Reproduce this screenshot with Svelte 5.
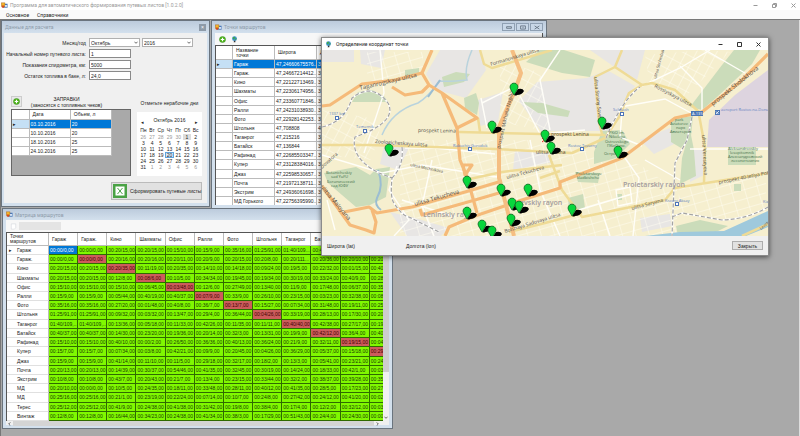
<script>
  const points = [
    ['Гараж', '47,24660675576...', '39'], ['Гараж.', '47,24667214412...', '39'],
    ['Кино', '47,22122713469...', '39'], ['Шахматы', '47,22306174956...', '39'],
    ['Офис', '47,23360771846...', '39'], ['Ралли', '47,24231038930...', '39'],
    ['Фото', '47,22928142253...', '39'], ['Штольня', '47,708808', '40'],
    ['Таганрог', '47,215216', '38'], ['Батайск', '47,136844', '39'],
    ['Рафинад', '47,22685503347...', '39'], ['Купер', '47,23128384016...', '39'],
    ['Джаз', '47,22598530657...', '39'], ['Почта', '47,21972138711...', '39'],
    ['Экстрим', '47,24936061698...', '39'], ['МД Горького', '47,22756395990...', '39']
  ];
  const fuel = [['03.10.2016', '20'], ['10.10.2016', '20'], ['18.10.2016', '25'], ['24.10.2016', '25']];
  const weekdays = ['Пн', 'Вт', 'Ср', 'Чт', 'Пт', 'Сб', 'Вс'];
  const first = -4;
  const weeks = Array.from({ length: 6 }, (_, w) =>
    Array.from({ length: 7 }, (_, d) => {
      const n = first + w * 7 + d;
      return { label: n < 1 ? n + 30 : n > 31 ? n - 31 : n, other: n < 1 || n > 31, off: n === 1, today: n === 20 };
    })
  );
  const columns = ['Гараж', 'Гараж.', 'Кино', 'Шахматы', 'Офис', 'Ралли', 'Фото', 'Штольня', 'Таганрог', 'Батайск', 'Рафинад', 'Купер'];
  const matrix = [
    ['Гараж', '00:00/0,00|00:00/0,00|00:20/15,00|00:20/15,00|00:15/10,00|00:15/9,00|00:35/16,00|01:25/91,00|01:40/109...|00:40/37,00|00:15/10,00|00:15/7,00'],
    ['Гараж.', '00:00/0,00|00:00/0,00|00:20/16,00|00:20/16,00|00:20/11,00|00:20/9,00|00:20/15,00|00:20/8,00|00:20/111...|00:20/36,00|00:20/10,00|00:20/7,00'],
    ['Кино', '00:20/15,00|00:20/15,00|00:20/35,00|00:11/19,00|00:20/35,00|00:14/10,00|00:14/18,00|00:09/24,00|00:19/5,00|00:22/32,00|00:01/15,00|00:40/9,00'],
    ['Шахматы', '00:20/15,00|00:20/15,00|00:12/8,00|00:08/6,00|00:10/5,00|00:34/34,00|00:19/45,00|00:19/34,00|00:30/19,00|00:33/24,00|00:40/9,00|00:28/4,00'],
    ['Офис', '00:15/10,00|00:15/10,00|00:15/10,00|00:06/45,00|00:03/48,00|00:12/6,00|00:27/49,00|00:13/40,00|00:11/9,00|00:17/48,00|00:06/37,00|00:35/2,00'],
    ['Ралли', '00:15/9,00|00:15/9,00|00:05/44,00|00:40/19,00|00:40/37,00|00:07/9,00|00:33/9,00|00:26/10,00|00:23/15,00|00:03/23,00|00:32/38,00|00:08/5,00'],
    ['Фото', '00:35/16,00|00:35/16,00|00:27/20,00|00:01/48,00|00:40/8,00|00:36/7,00|00:13/7,00|00:15/27,00|00:07/34,00|00:31/48,00|00:19/11,00|00:25/6,00'],
    ['Штольня', '01:25/91,00|01:25/91,00|00:09/32,00|00:03/32,00|00:13/47,00|00:29/4,00|00:36/44,00|00:04/26,00|00:33/19,00|00:28/13,00|00:17/30,00|00:20/8,00'],
    ['Таганрог', '01:40/109,...|01:40/109,...|00:13/36,00|00:05/18,00|00:11/33,00|00:42/26,00|00:11/35,00|00:11/11,00|00:40/40,00|00:42/38,00|00:27/17,00|00:19/4,00'],
    ['Батайск', '00:40/37,00|00:40/37,00|00:14/30,00|00:23/20,00|00:19/36,00|00:20/14,00|00:32/3,00|00:13/31,00|00:19/9,00|00:42/12,00|00:36/4,00|00:40/7,00'],
    ['Рафинад', '00:15/10,00|00:15/10,00|00:40/10,00|00:00/2,00|00:26/50,00|00:36/36,00|00:40/13,00|00:36/24,00|00:21/9,00|00:32/11,00|00:19/15,00|00:04/3,00'],
    ['Купер', '00:15/7,00|00:15/7,00|00:07/34,00|00:03/8,00|00:42/21,00|00:09/9,00|00:20/45,00|00:04/26,00|00:36/29,00|00:05/37,00|00:15/18,00|00:29/6,00'],
    ['Джаз', '00:15/9,00|00:15/9,00|00:41/14,00|00:11/10,00|00:11/5,00|00:29/18,00|00:32/17,00|00:18/2,00|00:13/3,00|00:05/41,00|00:23/21,00|00:24/3,00'],
    ['Почта', '00:20/13,00|00:20/13,00|00:14/39,00|00:30/37,00|00:54/46,00|00:41/35,00|00:32/45,00|00:30/19,00|00:14/24,00|00:18/33,00|00:42/1,00|00:03/2,00'],
    ['Экстрим', '00:10/8,00|00:10/8,00|00:43/7,00|00:20/43,00|00:21/7,00|00:13/4,00|00:23/15,00|00:33/44,00|00:32/2,00|00:38/37,00|00:39/28,00|00:35/9,00'],
    ['МД', '00:20/10,00|00:00/0,00|00:10/5,00|00:24/35,00|00:18/11,00|00:33/48,00|00:28/11,00|00:40/12,00|00:41/35,00|00:28/5,00|00:17/23,00|00:27/1,00'],
    ['МД', '00:25/16,00|00:25/16,00|00:21/1,00|00:23/19,00|00:22/24,00|00:07/14,00|00:10/7,00|00:24/8,00|00:27/42,00|00:24/12,00|00:41/20,00|00:02/5,00'],
    ['Терес', '00:25/12,00|00:25/12,00|00:41/9,00|00:24/38,00|00:41/38,00|00:31/42,00|00:19/8,00|00:38/4,00|00:17/4,00|00:12/2,00|00:32/12,00|00:03/7,00'],
    ['Винтаж', '00:12/8,00|00:12/8,00|00:16/44,00|00:34/23,00|00:24/38,00|00:41/34,00|00:38/3,00|00:17/29,00|00:51/43,00|00:24/4,00|00:24/30,00|00:00/8,00']
  ].map(([name, cells]) => ({ name, cells: cells.split('|') }));

  const pins = [[514, 95], [492, 133], [389, 156], [602, 129], [545, 142], [551, 154], [618, 158], [467, 188], [501, 196], [528, 196], [512, 210], [519, 213], [467, 219], [511, 226], [572, 216], [482, 232], [492, 238]];

  // x, y, rotation, text, kind
  const places = [
    [360, 90, -13, 'Taganrogskaya ulitsa', 'main'],
    [491, 66, -17, 'Formanovskaya ulitsa', 'road'],
    [500, 149, -77, 'prospekt Mikhaila Nagibina', 'road'],
    [418, 132, 1, 'prospekt Lenina', 'road'],
    [551, 136, 0, 'prospekt Lenina', 'road'],
    [375, 143, 4, 'Zoologicheskaya ulitsa', 'road'],
    [410, 166, 12, 'ulitsa Mechnikova', 'small'],
    [322, 169, -42, 'Dovatora', 'road'],
    [320, 187, 50, 'ulitsa Maloyana', 'main'],
    [415, 206, -16, 'ulitsa Tekucheva', 'main'],
    [507, 179, -15, 'ulitsa Tekucheva', 'road'],
    [594, 77, 84, 'ulitsa Strany Sovetov', 'road'],
    [656, 79, -74, 'ulitsa Shcherbakova', 'small'],
    [654, 87, 28, 'Rossiyskaya ulitsa', 'road'],
    [713, 106, -39, 'prospekt Sholokhova', 'main'],
    [536, 154, 0, 'ulitsa Lenina', 'road'],
    [505, 233, -17, 'Bolshaya Sadovaya ulitsa', 'road'],
    [632, 210, -15, 'ulitsa Saryana', 'road'],
    [719, 184, -11, 'prospekt 40-letiya Pobedy', 'road'],
    [702, 135, 87, 'ulitsa Vereseyeva', 'road'],
    [761, 230, -40, 'Levoberezhnaya', 'small'],
    [423, 217, 0, 'Leninskiy rayon', 'area'],
    [520, 205, 0, 'evskiy rayon', 'area'],
    [623, 187, 0, 'Proletarskiy rayon', 'area'],
    [329, 115, 0, '1337 km', 'rail'],
    [356, 128, 0, 'Temernik', 'rail'],
    [453, 147, 0, 'Rabochiy Gorodok', 'rail'],
    [613, 111, 0, 'Selmash', 'rail'],
    [568, 147, 0, 'Rostov-Tovarny', 'rail'],
    [665, 202, 0, 'Krasny Aksay', 'rail'],
    [721, 111, 0, 'aeroport Rostov-na-Donu', 'rail'],
    [763, 203, 0, 'Kiziterinka', 'rail'],
    [326, 174, 0, 'Botanicheskiy', 'park'],
    [331, 178, 0, 'sad YuFU', 'park'],
    [327, 183, 0, 'Ботанический', 'park'],
    [331, 187, 0, 'сад ЮФУ', 'park'],
    [675, 121, 0, 'park', 'park'],
    [670, 125, 0, 'Aviatorov', 'park'],
    [676, 129, 0, 'парк', 'park'],
    [670, 133, 0, 'Авиаторов', 'park'],
    [609, 134, 0, 'PKiO im.', 'park'],
    [609, 138, 0, 'Nikolaya', 'park'],
    [605, 143, 0, 'Ostrovskogo', 'park'],
    [607, 147, 0, 'ПКиО им.', 'park'],
    [604, 155, 0, 'Островского', 'park'],
    [576, 175, 0, 'Proletarskoye', 'park'],
    [577, 179, 0, 'kladbishche', 'park'],
    [728, 150, 0, 'Aleksandrovskiy', 'park'],
    [730, 154, 0, 'lesopitomnik', 'park'],
    [728, 158, 0, 'Александровский', 'park'],
    [731, 162, 0, 'лесопитомник', 'park']
  ];
  const stops = [[337, 118], [365, 131], [470, 149], [622, 114], [582, 149], [677, 204]];

  const orange = [
    'M322 106L330 105L362 84L395 80L422 73', 'M432 50L422 73L429 85L442 93L477 118L457 128L442 93',
    'M392 87L405 95L422 92L429 85', 'M457 128L460 160L467 177L477 213', 'M465 175l-2 -10h9z',
    'M344 212L369 207L377 213L412 207L465 192L502 181', 'M372 210L376 222L374 233L366 230L350 225L322 186',
    'M445 236L449 227L475 216L522 200L560 188L560 182L599 167L622 158L675 118L702 112L740 82L768 54', 'M420 209l2 6l53 -15l24 -7'
  ];
  const avenue = ['M512 50L521 73L514 93L499 127L499 178L514 236'];
  const yellow = [
    'M459 132L542 134L605 135', 'M322 145L369 145L432 147L495 149L572 153L605 138L619 117L629 93L642 85L652 83L675 90L699 112',
    'M642 85L615 67L622 50', 'M615 67L595 77L599 122L602 134', 'M592 215L665 200L675 188L768 173', 'M699 115L705 147L704 183',
    'M549 155L562 190L582 217L592 215', 'M480 50L484 64L492 68L552 50', 'M509 232L545 223L582 213', 'M768 224L742 236',
    'M465 180L502 172L562 165', 'M480 132L478 118', 'M540 178l20 -7'
  ];
  const white = [
    'M380 50l4 43l-20 60', 'M482 103l36 -18M487 128l-6 -30', 'M322 155l60 18l40 -8l75 12', 'M397 166l-8 24l20 30l-15 16',
    'M405 148h30l60 6', 'M432 160l-10 46l12 30', 'M520 96l20 38l45 -4', 'M642 86l38 -18l30 -18', 'M680 66l22 22v22', 'M705 50l45 26',
    'M620 107l45 -8l28 15', 'M622 112l-2 25l22 9', 'M625 158l14 20l-6 58', 'M572 212l60 -18', 'M645 160l35 20', 'M598 200l12 36',
    'M530 140l10 50l20 46', 'M327 200l8 30', 'M402 200l50 16', 'M690 149h78', 'M616 190l14 -3l2 16l-14 3z', 'M560 50l-20 30l10 50'
  ];
  const rails = 'M322 127Q345 122 352 98Q372 82 388 103Q398 122 355 137Q350 158 379 173L392 178Q390 198 394 203Q402 216 409 217L439 232M402 147Q404 166 392 178M692 117L687 140L675 163L672 236M672 217L682 213L722 220Q748 219 768 207M606 138Q622 100 640 87';
</script>

{#snippet formIcon()}
  <svg class="icon" viewBox="0 0 16 16" aria-hidden="true"><rect x="5" y="4" width="10" height="9" fill="#4a78b8" /><rect x="1" y="2" width="8" height="8" fill="#f5b72a" stroke="#a55d16" /><rect x="2" y="8" width="5" height="5" fill="#d44b1e" /><rect x="9" y="7" width="5" height="4" fill="#dbe9fa" /></svg>
{/snippet}
{#snippet plusIcon()}
  <svg class="icon" viewBox="0 0 16 16" aria-hidden="true"><circle cx="8" cy="8" r="7" fill="#51b51d" stroke="#2f8a12" /><path d="M8 4v8M4 8h8" stroke="#fff" stroke-width="2.6" /></svg>
{/snippet}
{#snippet globeIcon()}
  <svg class="icon" viewBox="0 0 16 16" aria-hidden="true"><circle cx="8" cy="6" r="5.5" fill="#3d90c9" /><path d="M4 3q4-3 5 0t-4 5zM9 6l4-1-2 5z" fill="#3da84a" /><path d="M7 11h3v3H6z" fill="#333" /></svg>
{/snippet}

<div class="app">
  <header class="titlebar">
    {@render formIcon()}
    <h1>Программа для автоматического формирования путевых листов [1.0.2.0]</h1>
    <div class="winbtns faded">
      <button aria-label="Свернуть"><svg viewBox="0 0 10 10"><path d="M1 5h8" /></svg></button>
      <button aria-label="Восстановить"><svg viewBox="0 0 10 10"><path d="M1 3h6v6H1zM3 3V1h6v6H7" /></svg></button>
      <button aria-label="Закрыть программу"><svg viewBox="0 0 10 10"><path d="M1 1l8 8M9 1L1 9" /></svg></button>
    </div>
  </header>
  <nav class="menu"><button>Основное</button><button>Справочники</button></nav>

  <main class="desk">
    <section class="win data">
      <div class="caption"><h2>Данные для расчета</h2><button class="close" aria-label="Закрыть">×</button></div>
      <div class="client">
        <div class="form">
          <label for="month">Месяц/год</label>
          <div class="pair">
            <span class="combo"><select id="month"><option>Октябрь</option></select><svg viewBox="0 0 10 6"><path d="M1 1l4 4 4-4" /></svg></span>
            <span class="combo"><select aria-label="Год"><option>2016</option></select><svg viewBox="0 0 10 6"><path d="M1 1l4 4 4-4" /></svg></span>
          </div>
          <label for="num">Начальный номер путевого листа:</label><input id="num" value="1" />
          <label for="odo">Показания спидометра, км:</label><input id="odo" value="5000" />
          <label for="rest">Остаток топлива в баке, л:</label><input id="rest" value="24,0" />
        </div>
        <div class="lower">
          <div class="fuel">
            <div class="fuelhead">
              <button class="add" aria-label="Добавить заправку">{@render plusIcon()}</button>
              <p>ЗАПРАВКИ<br />(заносятся с топливных чеков)</p>
            </div>
            <div class="fuelbox">
              <table class="grid">
                <thead><tr><th></th><th>Дата</th><th>Объем, л</th></tr></thead>
                <tbody>
                  {#each fuel as row, i}
                    <tr class:sel={i === 0}><th>{i === 0 ? '▸' : ''}</th><td>{row[0]}</td><td>{row[1]}</td></tr>
                  {/each}
                </tbody>
              </table>
            </div>
          </div>
          <div class="days">
            <p>Отметьте нерабочие дни</p>
            <div class="calendar">
              <div class="month"><button aria-label="Предыдущий месяц">◂</button><span>Октябрь 2016</span><button aria-label="Следующий месяц">▸</button></div>
              <table>
                <thead><tr>{#each weekdays as d}<th>{d}</th>{/each}</tr></thead>
                <tbody>
                  {#each weeks as week}
                    <tr>{#each week as d}<td class:other={d.other} class:off={d.off} class:today={d.today}>{d.label}</td>{/each}</tr>
                  {/each}
                </tbody>
              </table>
            </div>
          </div>
        </div>
        <button class="make">
          <svg viewBox="0 0 28 28" aria-hidden="true"><rect width="28" height="28" fill="#4aa245" /><rect x="5" y="5" width="18" height="18" fill="#fff" /><path d="M9 8l10 12M19 8L9 20" stroke="#4aa245" stroke-width="2" /></svg>
          <span>Сформировать путевые листы</span>
        </button>
      </div>
    </section>

    <section class="win points">
      <div class="caption">
        {@render formIcon()}<h2>Точки маршрутов</h2>
        <div class="mdi">
          <button aria-label="Свернуть окно"><svg viewBox="0 0 10 6"><path d="M2 2h6v2H2z" /></svg></button>
          <button aria-label="Развернуть окно"><svg viewBox="0 0 10 6"><path d="M2 1h6v4H2zM5 2v2" /></svg></button>
          <button aria-label="Закрыть окно"><svg viewBox="0 0 10 6"><path d="M2 1l6 4M8 1L2 5" /></svg></button>
        </div>
      </div>
      <div class="client">
        <div class="tools"><button aria-label="Добавить точку">{@render plusIcon()}</button><button aria-label="Показать на карте">{@render globeIcon()}</button></div>
        <table class="grid">
          <thead><tr><th></th><th>Название<br />точки</th><th>Широта</th><th>Долгота</th></tr></thead>
          <tbody>
            {#each points as p, i}
              <tr class:sel={i === 0}><th>{i === 0 ? '▸' : ''}</th>{#each p as v}<td>{v}</td>{/each}</tr>
            {/each}
          </tbody>
        </table>
      </div>
    </section>

    <section class="win matrix">
      <div class="caption">{@render formIcon()}<h2>Матрица маршрутов</h2></div>
      <div class="client">
        <div class="tools"><button aria-label="Обновить"><svg class="icon" viewBox="0 0 16 16"><path d="M3 2h10v9l-3 3H3z" fill="#fff" stroke="#c5cbd3" /></svg></button><input aria-label="Состояние" disabled /></div>
        <div class="scroll">
          <div class="view">
            <table class="grid">
              <thead><tr><th>Точки<br />маршрутов</th>{#each columns as c}<th>{c}</th>{/each}</tr></thead>
              <tbody>
                {#each matrix as row, i}
                  <tr>
                    <th><i>{i === 0 ? '▸' : ''}</i><span>{row.name}</span></th>
                    {#each row.cells as cell, j}<td class:red={i === j && i > 0} class:picked={i === 0 && j === 0}>{cell}</td>{/each}
                  </tr>
                {/each}
              </tbody>
            </table>
          </div>
          <div class="vbar"><div class="thumb"></div><svg viewBox="0 0 10 6"><path d="M1 1l4 4 4-4" /></svg></div>
        </div>
        <div class="hbar"><svg viewBox="0 0 6 10"><path d="M5 1L1 5l4 4" /></svg><div class="thumb"></div><svg viewBox="0 0 6 10"><path d="M1 1l4 4-4 4" /></svg></div>
      </div>
    </section>

    <section class="dialog">
      <div class="dtitle">
        {@render globeIcon()}<h2>Определение координат точки</h2>
        <div class="winbtns">
          <button aria-label="Свернуть карту"><svg viewBox="0 0 10 10"><path d="M1 5h8" /></svg></button>
          <button aria-label="Развернуть карту"><svg viewBox="0 0 10 10"><path d="M1 1h8v8H1z" /></svg></button>
          <button aria-label="Закрыть карту"><svg viewBox="0 0 10 10"><path d="M1 1l8 8M9 1L1 9" /></svg></button>
        </div>
      </div>
      <svg class="map" viewBox="322 50 446 186" preserveAspectRatio="xMidYMid slice">
        <defs>
          <pattern id="streets" width="13" height="9" patternUnits="userSpaceOnUse" patternTransform="rotate(-16)"><path d="M0 0H13M0 0V9" fill="none" stroke="#fffdf2" stroke-width="1" /></pattern>
          <pattern id="streets2" width="9" height="11" patternUnits="userSpaceOnUse" patternTransform="rotate(28)"><path d="M0 0H9M0 0V11" fill="none" stroke="#fffdf2" stroke-width="1" /></pattern>
        </defs>
        <rect x="322" y="50" width="446" height="186" fill="#f6efcf" />
        <g fill="#e8e6e4">
          <path d="M440 50h40l6 20l-20 28l-30 -8l-10 -16z" /><path d="M537 82l50 -4l20 -8l28 16l-12 20l-12 25h-70l-22 -30z" />
          <path d="M590 50h55l-8 30l-24 -14z" /><path d="M385 142l25 4l-12 24l-18 -6z" /><path d="M478 100l25 -8l-5 30l-18 4z" />
          <path d="M322 50h32v12h-32zM360 50h25l-4 18l-20 -4z" /><path d="M390 212l25 6l34 10l-8 8h-34z" /><path d="M690 150h14l2 24l-16 8z" /><path d="M640 218l30 -4l2 12l-30 6z" />
          <path d="M515 150h30l8 12l-40 8zM640 140l30 -12l4 16l-20 10z" />
        </g>
        <g fill="url(#streets)"><path d="M400 140H545L640 165L677 190V236H400z" /><path d="M680 186l86 -10v36l-40 8l-50 -5z" /><path d="M367 52h56v20l-56 10z" /></g>
        <g fill="url(#streets2)"><path d="M645 55l60 -5l25 2l-50 50l-30 -15z" /><path d="M500 62l40 10l10 60l-50 -10z" /><path d="M322 110l60 10l-10 40l-50 -5z" /></g>
        <path d="M707 147L709 120L735 95L768 70V147z" fill="#ddd4df" />
        <g fill="#cbdcba">
          <path d="M324 173l32 -6l14 8l6 -6l14 -2l-4 30l-16 8l-14 2l-28 -24z" /><path d="M352 102l6 -10l14 -2l12 6l4 6z" /><path d="M442 77l14 -5l14 2l-6 8l-20 5z" />
          <path d="M464 98l12 -5l3 10l-2 12l-12 -7z" /><path d="M526 62l14 -12h24l31 10l-5 17l-28 -4z" /><path d="M522 102l20 1l28 8l-2 6l-30 -4z" /><path d="M690 107l32 -42l12 -15h26l-8 14l-36 34l-14 12z" />
          <path d="M671 119l22 -3l-2 20l-10 12l-10 -6z" /><path d="M602 131l20 -1l8 14l-14 14l-22 6v-12z" /><path d="M575 172l25 1l-2 10l-20 -1z" /><path d="M690 130l4 20l2 26l-16 8l2 -26z" />
          <path d="M568 198l15 -4l2 14l-16 4z" /><path d="M728 147l28 0v18h-28z" /><path d="M734 184h7v7h-7z" /><path d="M676 226l24 -6l28 6l-20 10h-30z" /><path d="M405 70l14 -2v6l-14 3zM616 194h6v6h-6z" />
        </g>
        <path d="M645 236l35 -4l44 -1l22 -10l22 -10v16l-22 9z" fill="#9fc9dc" />
        <path d="M472 50q-8 18 -5 30q-18 2 -27 1q-12 16 -22 22q-26 8 -36 32" fill="none" stroke="#b9d3dd" stroke-width="1.5" />
        <path d="M440 80l-12 17M378 170q6 16 -1 28q-3 7 4 12" fill="none" stroke="#9bbdd2" stroke-width="2" />
        {#each white as d}<path {d} fill="none" stroke="#fffef8" stroke-width="1.4" />{/each}
        {#each yellow as d}<path {d} fill="none" stroke="#efdb96" stroke-width="2.5" stroke-linejoin="round" />{/each}
        {#each orange as d}<path {d} fill="none" stroke="#f5ba79" stroke-width="3.2" stroke-linejoin="round" />{/each}
        {#each avenue as d}<path {d} fill="none" stroke="#f5be82" stroke-width="4" stroke-linejoin="round" />{/each}
        <path d={rails} fill="none" stroke="#fff" stroke-width="1.6" />
        <path d={rails} fill="none" stroke="#a3a3a3" stroke-width="1.2" stroke-dasharray="4 2" />
        {#each stops as [x, y]}<rect x={x - 1.5} y={y - 1.5} width="3" height="3" fill="#fff" stroke="#4b73b8" />{/each}
        <rect x="691" y="111" width="12" height="5" fill="#4a76b5" /><text x="692" y="115" class="shield">A-135</text>
        <rect x="715" y="110" width="5" height="5" fill="#4a76b5" /><path d="M716 114l3 -3M716 111.5l2.5 2.5" stroke="#fff" stroke-width=".8" />
        {#each places as [x, y, a, t, kind]}<text class={kind} transform="translate({x} {y}) rotate({a})">{t}</text>{/each}
        <path d="M542 142l5 -4M542 138l5 4" stroke="#e22" />
        {#each pins as [x, y]}
          <g transform="translate({x} {y})">
            <path d="M0 0L4 -6Q9 -7 10 -4Q8 0 3 0Q2 1 0 0z" fill="#000" />
            <path d="M0 0L-3.5 -6A4 4 0 1 1 3.5 -6z" fill="#08d63c" stroke="#0a5a1c" stroke-width=".7" />
          </g>
        {/each}
      </svg>
      <div class="foot"><span>Широта (lat)</span><span>Долгота (lon)</span><button>Закрыть</button></div>
    </section>
  </main>
</div>

<style>
  :global(body) { margin: 0; }
  .app { display: flex; flex-direction: column; min-height: 100vh; background: #a9a9a9; color: #222; font: 5px/6px 'Liberation Sans', Arial, sans-serif; }
  .app * { box-sizing: border-box; }
  h1, h2, p { margin: 0; font-size: 5px; font-weight: 400; }
  button, input, select { font: inherit; color: inherit; padding: 0; margin: 0; border: 0; background: none; border-radius: 0; min-width: 0; }
  table { border-collapse: collapse; border-spacing: 0; }
  th, td { padding: 0; font-weight: 400; text-align: left; }
  .icon { width: 7px; height: 7px; display: block; flex: none; }
  .titlebar { display: flex; align-items: center; gap: 2px; height: 10px; padding: 0 4px 0 1px; background: #fff; }
  h1, h2, .menu { font-family: Roboto, 'Liberation Sans', sans-serif; }
  h1 { color: #999; }
  .winbtns { display: flex; gap: 14px; margin-left: auto; }
  .winbtns button { width: 5px; height: 5px; }
  svg { display: block; }
  .winbtns svg { width: 5px; height: 5px; fill: none; stroke: #333; stroke-width: 2; }
  .winbtns.faded svg { stroke: #999; }
  .menu { display: flex; gap: 8px; height: 10px; padding-left: 6px; background: #f9f9f9; border-bottom: 1px solid #777; }
  .desk { position: relative; flex: 1; border-left: 1px solid #777; border-right: 1px solid #ddd; }
  .win { position: absolute; display: flex; flex-direction: column; padding: 0 3px 3px; background: #d3e0ed; border: 1px solid #6a747e; }
  .caption { display: flex; align-items: center; gap: 2px; height: 12px; flex: none; background: linear-gradient(#bccbdc, #d3e0ed); margin: 0 -3px; padding: 0 3px; }
  .caption h2 { color: #8e9cab; }
  .close { margin-left: auto; width: 7px; height: 7px; background: #8d9aa8; color: #fff; line-height: 6px; text-align: center; }
  .client { flex: 1; min-height: 0; background: #f0f0f0; display: flex; flex-direction: column; }
  .data { left: 0; top: 0; width: 209px; height: 187px; padding: 0 2px 3px; }
  .data .caption { margin: 0 -2px; }
  .data .client { padding: 5px 5px 0 7px; }
  .form { display: grid; grid-template-columns: 75px 42px; align-items: center; gap: 2px 3px; }
  .form label { justify-self: end; white-space: nowrap; }
  .form input, .combo select { height: 9px; width: 100%; padding: 0 1px; background: #fff; border: 1px solid #8a8a8a; }
  .pair { display: flex; gap: 2px; width: 104px; }
  .combo { position: relative; flex: 1; }
  .combo select { display: block; appearance: none; border-color: #b0b0b0; }
  .combo svg { position: absolute; right: 2px; top: 3px; width: 4px; height: 3px; fill: none; stroke: #444; stroke-width: 2; pointer-events: none; }
  .lower { display: flex; gap: 6px; margin-top: 16px; }
  .fuel { width: 120px; }
  .fuelhead { display: flex; height: 13px; gap: 6px; }
  .fuelhead p { flex: 1; padding-right: 26px; text-align: center; white-space: nowrap; }
  .add { width: 11px; height: 11px; border: 1px solid #ccc; background: #e8e8e8; display: grid; place-items: center; }
  .fuelbox { height: 67px; background: #a9a9a9; border: 1px solid #666; }
  .fuelbox table { width: 100px; table-layout: fixed; }
  .grid { background: #fff; }
  .grid th, .grid td { border-right: 1px solid #bbb; border-bottom: 1px solid #bbb; white-space: nowrap; overflow: hidden; padding-left: 1px; }
  .grid thead th { padding-left: 3px; }
  .fuelbox tr { height: 9px; }
  .fuelbox th:first-child { width: 17px; }
  .sel th { background: #c5e0f5; }
  .sel td { background: #0078d7; color: #fff; }
  .days { flex: 1; }
  .days > p { height: 16px; padding-top: 4px; text-align: center; white-space: nowrap; }
  .calendar { height: 64px; padding: 5px 2px 0; background: #fff; }
  .month { display: flex; justify-content: space-between; height: 9px; padding: 0 2px; }
  .calendar table { width: 100%; table-layout: fixed; line-height: 6px; }
  .calendar th, .calendar td { text-align: center; }
  .calendar th { height: 8px; }
  .other { color: #999; }
  .off { background: #ddd; }
  .today { background: #d9ebfa; box-shadow: inset 0 0 0 1px #5fa4dc; }
  .make { display: flex; align-items: center; align-self: flex-end; gap: 3px; width: 91px; height: 18px; margin-top: 6px; padding: 0 1px; background: #e1e1e1; border: 1px solid #bbb; white-space: nowrap; }
  .make svg { width: 14px; height: 14px; flex: none; }
  .points { left: 210px; top: 0; width: 336px; height: 189px; }
  .mdi { display: flex; gap: 1px; margin-left: auto; }
  .mdi button { width: 13px; height: 8px; border: 1px solid #8fa0b3; background: #c8d7e7; display: grid; place-items: center; }
  .mdi svg { width: 8px; height: 5px; fill: none; stroke: #5d6b7a; }
  .tools { display: flex; align-items: center; gap: 5px; height: 12px; padding: 0 4px; flex: none; background: #f7f7f7; }
  .points .grid, .matrix .grid, .points thead, .matrix thead { display: block; }
  .points .client { overflow: hidden; border-right: 1px solid #555; }
  .points .grid { border: 1px solid #555; }
  .points tr { display: grid; grid-template-columns: 17px 42px 42px 1fr; }
  .points thead tr { height: 14px; align-items: stretch; }
  .points thead th, .matrix thead th { display: flex; align-items: center; line-height: 5px; }
  .points tbody, .matrix tbody { display: grid; grid-auto-rows: minmax(0, 1fr); }
  .points tbody { height: 146px; }
  .points td, .points th, .matrix td, .matrix th { line-height: 8px; min-width: 0; min-height: 0; }
  .matrix { left: 1px; top: 188px; width: 391px; height: 221px; }
  .matrix .caption { height: 11px; }
  .matrix .tools input { width: 42px; height: 8px; background: #e4e4e4; }
  .matrix .tools { gap: 2px; }
  .scroll { display: flex; height: 189px; }
  .view { flex: 1; min-width: 0; overflow: hidden; border: 1px solid #555; border-right: 0; border-bottom: 0; }
  .matrix .grid { width: 392px; }
  .matrix tr { display: grid; grid-template-columns: 42px repeat(12, 1fr); grid-template-rows: minmax(0, 1fr); }
  .matrix thead tr { height: 13px; }
  .matrix tbody { height: 175px; }
  .matrix tbody th { display: flex; padding-left: 2px; border-bottom-color: #e0e0e0; }
  .matrix tbody th i { width: 8px; flex: none; font-style: normal; }
  .matrix tbody td { background: #80f800; color: #163800; border-color: #2f6a00; }
  .matrix tbody td.red { background: #cd5c5c; color: #400; }
  .matrix tbody td.picked { background: #0078d7; color: #fff; }
  .vbar { display: flex; flex-direction: column; width: 6px; padding-bottom: 2px; background: #f0f0f0; align-items: center; }
  .vbar .thumb { width: 100%; height: 140px; background: #cdcdcd; margin-bottom: auto; }
  .vbar svg { width: 4px; height: 3px; }
  .vbar svg, .hbar svg { fill: none; stroke: #444; stroke-width: 2; }
  .hbar { display: flex; align-items: center; gap: 2px; height: 6px; padding: 0 10px 0 2px; }
  .hbar svg { width: 3px; height: 4px; }
  .hbar .thumb { height: 5px; flex: 1; background: #d4d4d4; }
  .dialog { position: absolute; left: 320px; top: 17px; width: 448px; background: #f0f0f0; border: 1px solid #8b8b8b; box-shadow: 0 1px 5px rgba(0, 0, 0, 0.6); }
  .dtitle { display: flex; align-items: center; gap: 4px; height: 12px; padding: 0 7px 0 3px; background: #fff; }
  .map { width: 100%; height: 186px; }
  .foot { display: flex; align-items: center; height: 19px; padding: 0 5px; }
  .foot span { width: 79px; }
  .foot button { margin-left: auto; width: 31px; height: 9px; background: #e1e1e1; border: 1px solid #adadad; }
  .map text { font-family: 'Open Sans', 'Noto Sans', sans-serif; font-size: 5px; fill: #554f48; }
  .map .main { font-size: 6px; }
  .map .small { font-size: 4px; }
  .map .area { font-size: 7px; font-weight: 600; fill: #a29b9e; }
  .map .rail { font-size: 4px; fill: #5d7fc0; }
  .map .park { font-size: 4px; fill: #44704a; }
  .map .shield { font-size: 4px; fill: #fff; }
</style>
